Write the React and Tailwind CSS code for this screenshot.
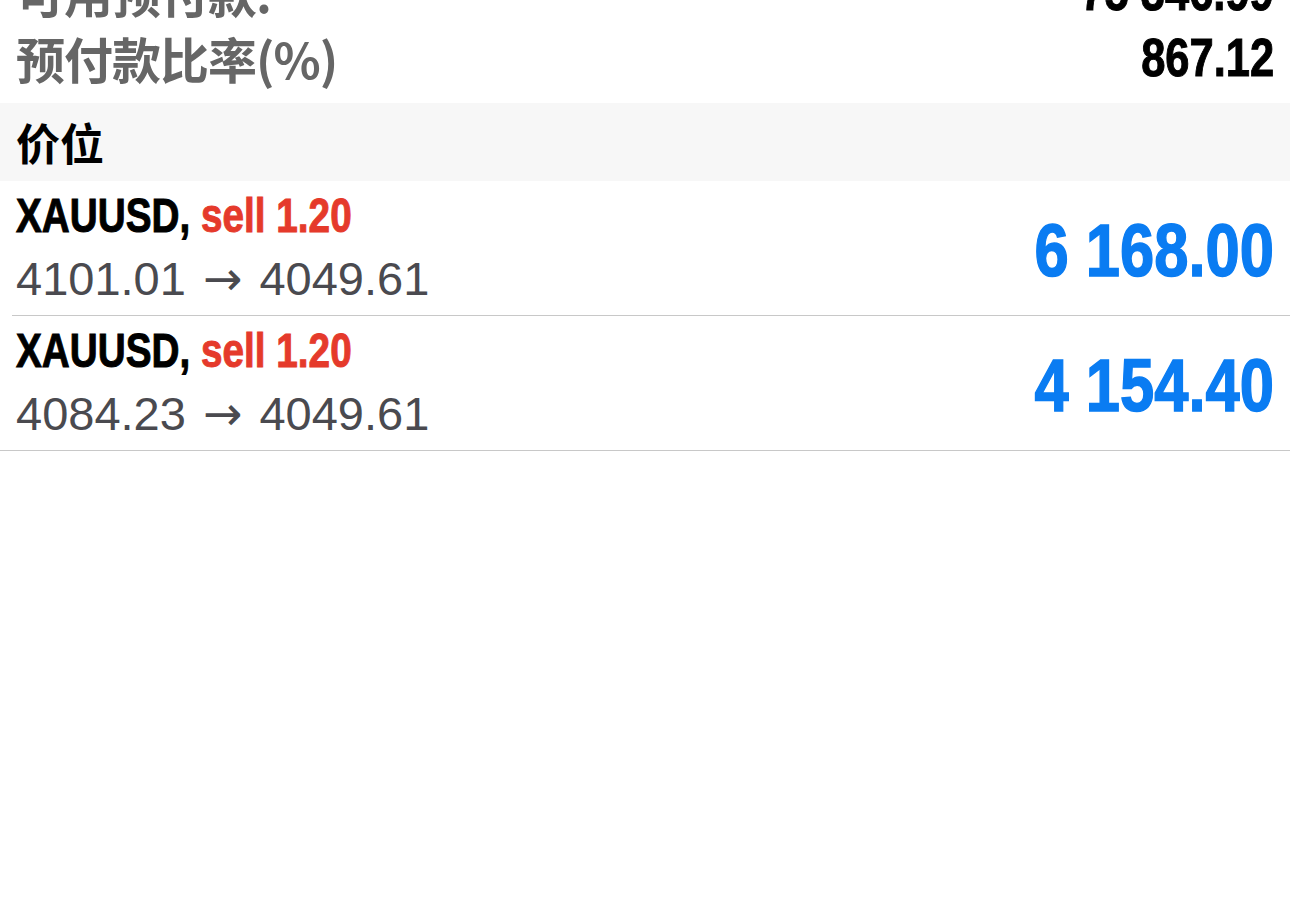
import React from 'react';

const cjk = { fontFamily: '"Noto Sans CJK SC", sans-serif' };
const arrowFont = { fontFamily: '"DejaVu Sans", sans-serif' };

const accountRows = [
    { label: '可用预付款:', value: '75 346.99' },
    { label: '预付款比率(%)', value: '867.12' },
];

const positions = [
    { symbol: 'XAUUSD', side: 'sell', volume: '1.20', open: '4101.01', current: '4049.61', profit: '6 168.00' },
    { symbol: 'XAUUSD', side: 'sell', volume: '1.20', open: '4084.23', current: '4049.61', profit: '4 154.40' },
];

const App = () => {
    return (
        <div className="w-[1290px] h-[910px] bg-white overflow-hidden" style={{ fontFamily: '"Liberation Sans", "Noto Sans CJK SC", sans-serif' }}>
            {/* account summary, scrolled partly out of view */}
            <div className="-mt-[42px] pb-[13px]">
                {accountRows.map(row => (
                    <div key={row.label} className="flex items-center justify-between px-4 h-[66px]">
                        <span className="text-[49px] font-bold text-[#666666] leading-none tracking-[-1px]" style={cjk}>
                            {row.label}
                        </span>
                        <span className="inline-block origin-right scale-x-[0.82] text-[53px] font-bold text-black leading-none [-webkit-text-stroke:1px_currentColor]">
                            {row.value}
                        </span>
                    </div>
                ))}
            </div>

            {/* section header */}
            <div className="bg-[#f7f7f7] h-[78px] flex items-center px-4">
                <span className="text-[44px] font-bold text-black leading-none" style={cjk}>价位</span>
            </div>

            {/* open positions */}
            <div className="border-b border-[#c8c8c8]">
                {positions.map((p, i) => (
                    <div key={i} className={i > 0 ? 'border-t border-[#c8c8c8] ml-[12px]' : ''}>
                        <div className={`flex items-center justify-between pr-4 h-[134px] ${i > 0 ? 'pl-[4px]' : 'pl-4'}`}>
                            <div className="flex flex-col">
                                <div className="h-[58px] leading-[58px]">
                                    <span className="inline-block origin-left scale-x-[0.79] text-[49px] font-bold whitespace-nowrap [-webkit-text-stroke:1px_currentColor]">
                                        <span className="text-black">{p.symbol},</span>{' '}
                                        <span className="text-[#e53a2b]">{p.side} {p.volume}</span>
                                    </span>
                                </div>
                                <div className="mt-[4px] text-[47px] text-[#4a4a4f] leading-[62px] whitespace-nowrap">
                                    {p.open} <span className="mx-[4px]" style={arrowFont}>→</span> {p.current}
                                </div>
                            </div>
                            <span className="mt-[4px] inline-block origin-right scale-x-[0.82] text-[75px] font-bold text-[#0a7cf2] leading-none whitespace-nowrap [-webkit-text-stroke:1.5px_currentColor]">
                                {p.profit}
                            </span>
                        </div>
                    </div>
                ))}
            </div>
        </div>
    );
};

export default App;
